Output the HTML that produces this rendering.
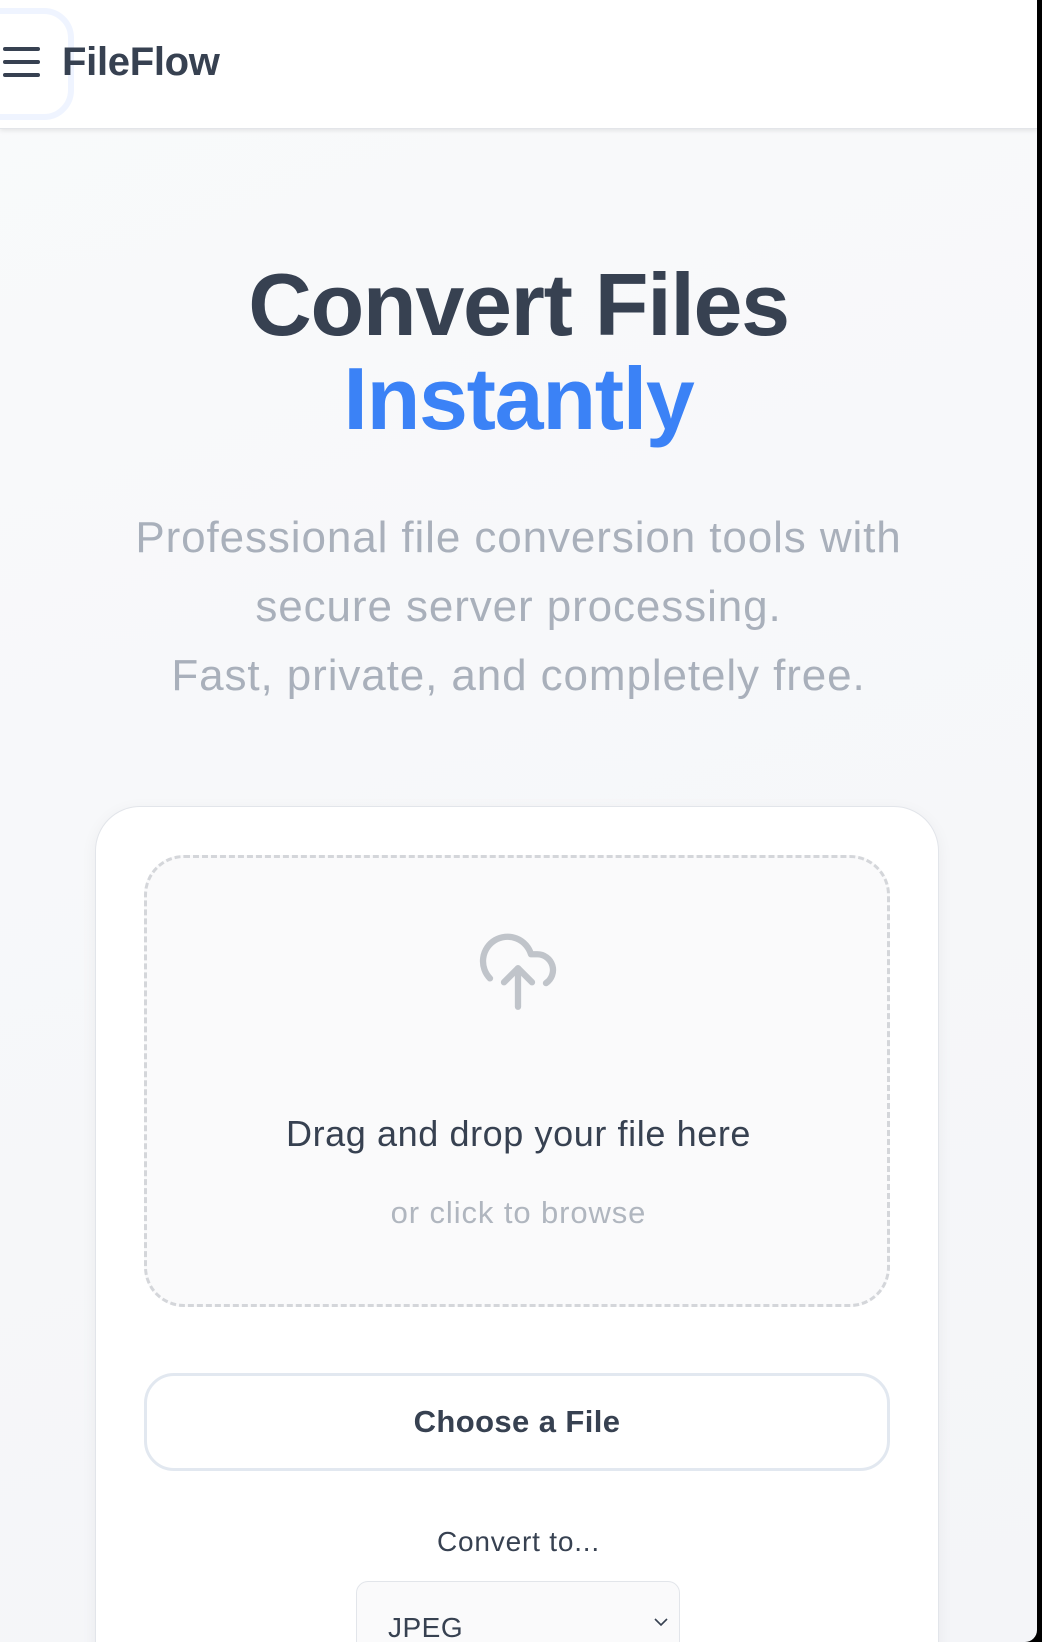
<!DOCTYPE html>
<html><head><meta charset="utf-8"><style>
*{margin:0;padding:0;box-sizing:border-box}
html,body{width:1042px;height:1642px;overflow:hidden;background:#000}
body{font-family:"Liberation Sans",sans-serif;position:relative}
.page{position:absolute;left:0;top:0;width:1037px;height:1642px;background:linear-gradient(160deg,#f9fafb,#f4f5f8);border-bottom-right-radius:12px;overflow:hidden}
.hdr{position:absolute;left:0;top:0;width:1037px;height:129px;background:#fff;box-shadow:0 2px 4px rgba(0,0,0,.08);border-bottom:1px solid #e3e5e9}
.ring{position:absolute;left:-40px;top:8px;width:114px;height:112px;border:6px solid #eff4ff;border-radius:30px}
.ham{position:absolute;left:3px;top:47px;width:37px}
.ham i{display:block;height:4px;background:#374151;border-radius:2px;margin-bottom:9px}
.logo{position:absolute;left:62px;top:40px;font-size:40px;font-weight:bold;color:#374151;letter-spacing:-0.3px}
h1{position:absolute;left:0;width:1037px;text-align:center;font-size:88px;font-weight:bold;color:#374151;line-height:94px;top:258px;letter-spacing:-1.3px}
h1 span{color:#3b82f6}
.sub{position:absolute;left:0;width:1037px;text-align:center;top:503px;font-size:44px;line-height:69px;color:#a9b0bb;letter-spacing:0.9px}
.card{position:absolute;left:95px;top:806px;width:844px;height:900px;background:#fff;border:1.5px solid #e2e5ea;border-radius:45px;box-shadow:0 4px 16px rgba(0,0,0,.05)}
.drop{position:absolute;left:144px;top:855px;width:746px;height:452px;border:3px dashed #d4d6da;border-radius:40px;background:#fafafb}
.t1{position:absolute;left:0;width:1037px;text-align:center;top:1113px;font-size:36px;color:#374151;letter-spacing:0.6px}
.t2{position:absolute;left:0;width:1037px;text-align:center;top:1195px;font-size:31px;color:#b0b6bf;letter-spacing:0.9px}
.btn{position:absolute;left:144px;top:1373px;width:746px;height:98px;border:3px solid #e2e8f0;border-radius:30px;background:#fff;text-align:center;line-height:92px;font-size:31px;font-weight:bold;color:#374151;letter-spacing:0.4px}
.cv{position:absolute;left:0;width:1037px;text-align:center;top:1526px;font-size:28px;color:#374151;letter-spacing:0.8px}
.sel{position:absolute;left:356px;top:1581px;width:324px;height:80px;border:1.5px solid #e2e5ea;border-radius:12px;background:#fafafb}
.sel b{position:absolute;left:31px;top:30px;font-weight:normal;font-size:28px;color:#374151;letter-spacing:0.5px}
</style></head><body><div class="page">
<div class="hdr"><div class="ring"></div><div class="ham"><i></i><i></i><i></i></div><div class="logo">FileFlow</div></div>
<h1>Convert Files<br><span>Instantly</span></h1>
<div class="sub">Professional file conversion tools with<br>secure server processing.<br>Fast, private, and completely free.</div>
<div class="card"></div>
<div class="drop"></div>
<svg style="position:absolute;left:476px;top:926px" width="84" height="88" viewBox="0 0 24 25" fill="none" stroke="#c0c4ca" stroke-width="1.8" stroke-linecap="round" stroke-linejoin="round"><path d="M4 14.899A7 7 0 1 1 15.71 8h1.79a4.5 4.5 0 0 1 2.5 8.242"/><path d="M12 12v11"/><path d="m16 16-4-4-4 4"/></svg>
<div class="t1">Drag and drop your file here</div>
<div class="t2">or click to browse</div>
<div class="btn">Choose a File</div>
<div class="cv">Convert to...</div>
<div class="sel"><b>JPEG</b><svg style="position:absolute;left:296px;top:34px" width="16" height="12" viewBox="0 0 16 12" fill="none" stroke="#374151" stroke-width="1.6"><path d="M2 3l6 6 6-6"/></svg></div>
</div></body></html>
